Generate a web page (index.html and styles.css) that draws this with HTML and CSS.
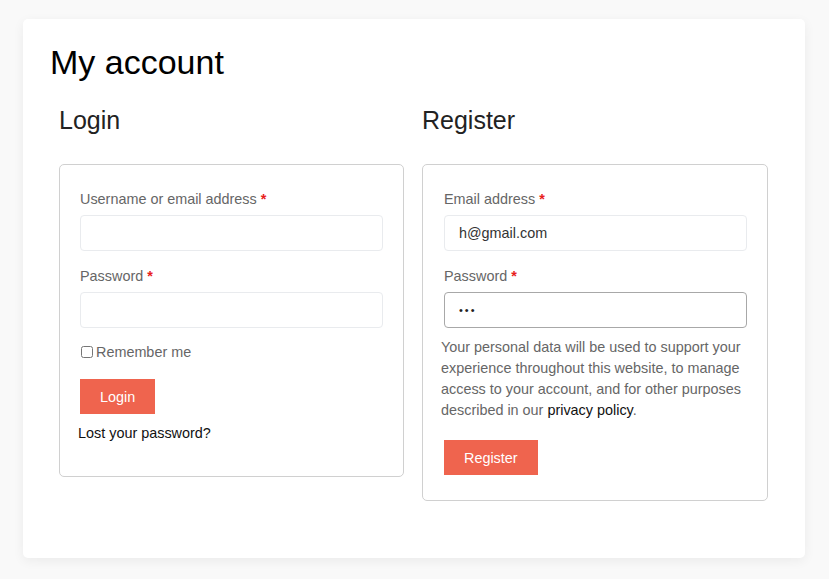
FILE: index.html
```html
<!DOCTYPE html>
<html lang="en">
<head>
<meta charset="utf-8">
<title>My account</title>
<link rel="stylesheet" href="styles.css">
</head>
<body>
<div class="card">
  <h1 class="title">My account</h1>
  <div class="cols">
    <div class="col">
      <h2 class="col-title">Login</h2>
      <form class="box">
        <div class="row">
          <label class="lbl">Username or email address <span class="req">*</span></label>
          <input class="field" type="text">
        </div>
        <div class="row">
          <label class="lbl">Password <span class="req">*</span></label>
          <input class="field" type="password">
        </div>
        <div class="row row-check">
          <label class="check"><input class="cb" type="checkbox"> Remember me</label>
        </div>
        <div class="row row-btn">
          <button class="btn" type="button">Login</button>
        </div>
        <p class="lost"><a class="link" href="#">Lost your password?</a></p>
      </form>
    </div>
    <div class="col">
      <h2 class="col-title">Register</h2>
      <form class="box box-reg">
        <div class="row">
          <label class="lbl">Email address <span class="req">*</span></label>
          <input class="field" type="text" value="h@gmail.com">
        </div>
        <div class="row row-tight">
          <label class="lbl">Password <span class="req">*</span></label>
          <input class="field field-focus" type="password" value="abc">
        </div>
        <p class="privacy">Your personal data will be used to support your experience throughout this website, to manage access to your account, and for other purposes described in our <a class="link" href="#">privacy policy</a>.</p>
        <div class="row row-last">
          <button class="btn" type="button">Register</button>
        </div>
      </form>
    </div>
  </div>
</div>
</body>
</html>
```
FILE: styles.css
```css
html, body {
  margin: 0;
  background: #f9f9f9;
}
body {
  padding: 19px 24px 21px 23px;
  font-family: "Liberation Sans", Arial, sans-serif;
  font-size: 14.4px;
  color: #666;
}
.card {
  background: #fff;
  border-radius: 5px;
  box-shadow: 0 3px 12px rgba(0, 0, 0, 0.06);
  padding: 23px 27px 57px;
}
.title {
  margin: 0 0 23px;
  font-size: 34px;
  line-height: 40px;
  font-weight: 400;
  color: #000;
}
.cols {
  display: grid;
  grid-template-columns: 345px 1fr;
  column-gap: 18px;
  align-items: start;
  padding: 0 10px 0 9px;
}
.col-title {
  margin: 0 0 29px;
  font-size: 25px;
  line-height: 30px;
  font-weight: 400;
  color: #222;
}
.box {
  border: 1px solid #d0d0d0;
  border-radius: 5px;
  padding: 21px 18px 20px;
}
.box-reg .row {
  padding-left: 3px;
}
.row {
  padding: 3px 2px;
  margin-bottom: 9px;
}
.row-tight {
  margin-bottom: 6px;
}
.row-check {
  margin-bottom: 12px;
}
.row-btn {
  margin-bottom: 6px;
}
.row-last {
  margin-bottom: 2px;
}
.lbl {
  display: block;
  line-height: 21px;
  margin-bottom: 5px;
  color: #666;
}
.req {
  color: #e8201c;
  font-weight: 700;
}
.field {
  display: block;
  box-sizing: border-box;
  width: 100%;
  height: 36px;
  margin: 0;
  padding: 0 14px;
  border: 1px solid #e9ebee;
  border-radius: 4px;
  background: #fff;
  font-family: "Liberation Sans", Arial, sans-serif;
  font-size: 14.4px;
  color: #333;
  outline: none;
}
.field-focus {
  border-color: #a8a8a8;
  font-size: 11px;
  letter-spacing: 2px;
  color: #222;
}
.check {
  display: flex;
  align-items: center;
  line-height: 18px;
  color: #666;
}
.cb {
  width: 12px;
  height: 12px;
  margin: 0 3px 0 1px;
}
.btn {
  display: block;
  height: 35px;
  padding: 0 20px;
  border: 0;
  border-radius: 0;
  background: #ef644e;
  color: #fff;
  font-family: "Liberation Sans", Arial, sans-serif;
  font-size: 14.4px;
  cursor: pointer;
}
.lost {
  margin: 0 0 12px;
  line-height: 21px;
}
.link {
  color: #111;
  text-decoration: none;
}
.privacy {
  margin: 0 0 16px;
  line-height: 21px;
  color: #666;
}
```
